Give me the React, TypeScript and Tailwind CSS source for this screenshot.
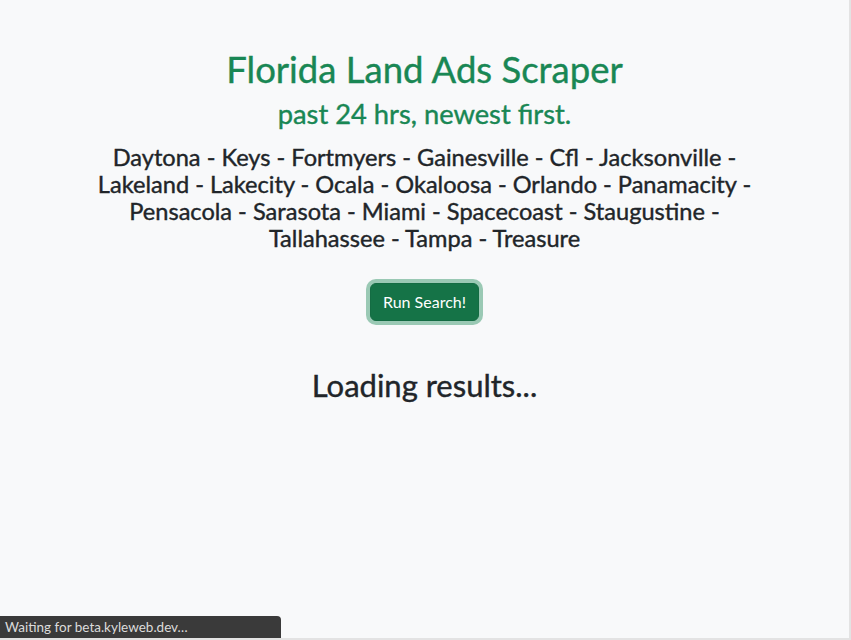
const cities = [
	"Daytona",
	"Keys",
	"Fortmyers",
	"Gainesville",
	"Cfl",
	"Jacksonville",
	"Lakeland",
	"Lakecity",
	"Ocala",
	"Okaloosa",
	"Orlando",
	"Panamacity",
	"Pensacola",
	"Sarasota",
	"Miami",
	"Spacecoast",
	"Staugustine",
	"Tallahassee",
	"Tampa",
	"Treasure",
];

export default function App() {
	return (
		<div className="relative h-[640px] w-[851px] overflow-hidden bg-[#f8f9fa] border-r-2 border-b-2 border-[#e3e3e3] font-['Lato','Noto_Sans',sans-serif] text-[#212529]">
			<div className="mx-auto flex w-[696px] flex-col items-center pt-[48px] text-center [-webkit-text-stroke:0.4px_currentColor]">
				<h1 className="text-[36.5px] leading-[42px] font-normal text-[#198754]">
					Florida Land Ads Scraper
				</h1>
				<h3 className="mt-2 text-[27.3px] leading-[31px] font-normal text-[#198754]">
					past 24 hrs, newest first.
				</h3>
				<h4 className="mt-[15px] text-[23.6px] leading-[27px] font-normal">
					{cities.join(" - ")}
				</h4>
				<button className="mt-[31px] rounded-md border border-[#146c43] bg-[#157347] px-3 py-1.5 text-base leading-6 text-white shadow-[0_0_0_4px_rgba(60,153,110,0.5)] [-webkit-text-stroke:0]">
					Run Search!
				</button>
				<h2 className="mt-[47px] text-[31px] leading-[35px] font-normal">
					Loading results...
				</h2>
			</div>
			<div className="absolute bottom-0 left-0 w-[281px] rounded-tr-[4px] bg-[#3a3a3a] px-[5px] py-[3px] text-[13.5px] leading-[16px] text-[#dcdcdc]">
				Waiting for beta.kyleweb.dev…
			</div>
		</div>
	);
}
